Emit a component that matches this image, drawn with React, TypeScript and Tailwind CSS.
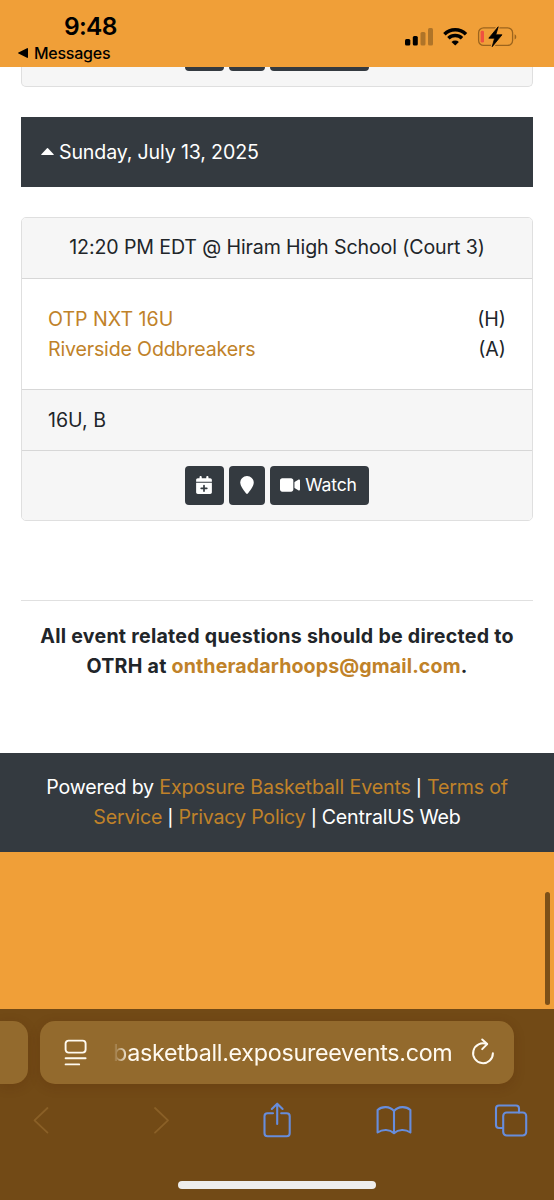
import React from "react";
import { FaCalendarPlus, FaLocationPin, FaVideo } from "react-icons/fa6";

function StatusBar() {
  return (
    <header className="flex h-[67px] shrink-0 justify-between bg-[#f09f38] text-black">
      <div className="flex flex-col pl-[18px]">
        <div className="mt-[10px] pl-[46px] text-[24.5px] leading-[32px] font-semibold tracking-[-0.7px]">9:48</div>
        <div className="flex h-[22px] items-center gap-[6px] text-[16px] leading-[22px] font-medium tracking-[-0.25px]">
          <svg width="10" height="10" viewBox="0 0 10 10">
            <path d="M10 .4v9.2a.8.8 0 0 1-1 .2L.5 5.6a.7.7 0 0 1 0-1.2L9 .2a.8.8 0 0 1 1 .2Z" />
          </svg>
          <span>Messages</span>
        </div>
      </div>
      <svg className="mt-[24px] mr-[36px]" width="114" height="26" viewBox="404 24 114 26">
        <rect x="405" y="39" width="5.3" height="6.5" rx="1.5" />
        <rect x="412.8" y="36" width="5" height="9.5" rx="1.5" />
        <rect x="420.5" y="32" width="5" height="13.5" rx="1.5" opacity=".27" />
        <rect x="428" y="28" width="5" height="17.5" rx="1.5" opacity=".27" />
        <g fill="none" stroke="#000" strokeWidth="3.5">
          <path d="M444.4 34.2a15.5 15.5 0 0 1 21.6 0" />
          <path d="M448.4 38.3a9.8 9.8 0 0 1 13.6 0" />
        </g>
        <path d="M451.5 42a5.4 5.4 0 0 1 7.4 0L455.2 45.6Z" />
        <rect x="478.6" y="27.8" width="34" height="17.6" rx="5" fill="none" stroke="#9c641d" strokeWidth="1.3" />
        <path d="M514.6 34.2c2.2.9 2.2 4.4 0 5.2Z" fill="#9c641d" />
        <rect x="480.6" y="30.8" width="3.4" height="11.8" rx="1.4" fill="#ef5140" />
        <path d="M498.2 26.8 488.8 38.2h5.8l-2.4 8.5 9.8-11.9h-6.2Z" stroke="#f09f38" strokeWidth="3" />
        <path d="M498.2 26.8 488.8 38.2h5.8l-2.4 8.5 9.8-11.9h-6.2Z" stroke="#000" strokeWidth=".8" strokeLinejoin="round" />
      </svg>
    </header>
  );
}

function GameCard() {
  return (
    <section className="mt-[30px] flex h-[304px] flex-col overflow-hidden rounded-[5px] border-[1.5px] border-[#dfdfdf] bg-white">
      <div className="flex h-[61px] items-center justify-center border-b-[1.5px] border-[#d7d7d7] bg-[#f6f6f6] pb-[2px] tracking-[-0.12px] whitespace-nowrap">
        12:20 PM EDT @ Hiram High School (Court 3)
      </div>
      <div className="flex h-[111px] flex-col justify-center border-b-[1.5px] border-[#d7d7d7] px-[26px] pb-px">
        <div className="flex justify-between">
          <a className="text-[#c08229]">OTP NXT 16U</a>
          <span>(H)</span>
        </div>
        <div className="flex justify-between">
          <a className="tracking-[-0.17px] text-[#c08229]">Riverside Oddbreakers</a>
          <span>(A)</span>
        </div>
      </div>
      <div className="flex h-[61px] items-center border-b-[1.5px] border-[#d7d7d7] bg-[#f6f6f6] px-[26px]">16U, B</div>
      <div className="flex flex-1 items-center justify-center gap-[5px] bg-[#f6f6f6] pb-px text-white">
        <button className="flex h-[39px] w-[39px] items-center justify-center rounded-[4px] bg-[#343a40] pr-px pb-px">
          <FaCalendarPlus size={18} />
        </button>
        <button className="flex h-[39px] w-[36px] items-center justify-center rounded-[4px] bg-[#343a40] pr-px pb-px">
          <FaLocationPin size={18} />
        </button>
        <button className="flex h-[39px] w-[99px] items-center justify-center gap-[5px] rounded-[4px] bg-[#343a40] pr-[2px] pb-px text-[17.6px] tracking-[-0.15px]">
          <FaVideo size={20} />
          <span>Watch</span>
        </button>
      </div>
    </section>
  );
}

function BrowserBar() {
  return (
    <div className="flex h-[191px] shrink-0 flex-col bg-[#724a16]">
      <div className="mt-[12px] flex h-[63px] gap-[12px]">
        <div className="w-[28px] rounded-r-[15px] bg-[#936a2d] shadow-[0_3px_12px_rgba(80,30,0,.2)]" />
        <div className="flex w-[474px] items-center rounded-[15px] bg-[#936a2d] text-[#fffaf0] shadow-[0_3px_12px_rgba(80,30,0,.2)]">
          <svg className="ml-[24px]" width="24" height="28" viewBox="0 0 24 28" fill="none" stroke="currentColor" strokeWidth="1.9" strokeLinecap="round">
            <rect x="1.6" y="1.6" width="20" height="12" rx="3" />
            <path d="M1.6 19.2h20M1.6 25.4h13.6" />
          </svg>
          <div className="ml-[25px] w-[342px] text-[23.3px] tracking-[-0.3px] whitespace-nowrap [mask-image:linear-gradient(to_right,transparent,black_16px)]">
            basketball.exposureevents.com
          </div>
          <svg className="mb-[2px] ml-[16px]" width="26" height="28" viewBox="0 0 26 28" fill="none" stroke="currentColor" strokeWidth="2" strokeLinecap="round" strokeLinejoin="round">
            <path d="M15.8 6.1A9.9 9.9 0 1 0 21.9 15.2" />
            <path d="m11.2 1.5 5 4.6-5 5" />
          </svg>
        </div>
      </div>
      <svg width="554" height="66" viewBox="0 1084 554 66" fill="none" strokeLinecap="round" strokeLinejoin="round" strokeWidth="2.1" stroke="#678ddc">
        <g stroke="#8a6027" strokeWidth="1.8">
          <path d="m47.5 1108-13 12.3 13 12.3" />
          <path d="m155 1108 13 12.3-13 12.3" />
        </g>
        <path d="M273 1113.2h-5.5a3 3 0 0 0-3 3v17a3 3 0 0 0 3 3h19.2a3 3 0 0 0 3-3v-17a3 3 0 0 0-3-3h-5.5" />
        <path d="M277.2 1124v-20m-5.4 5 5.4-5.3 5.4 5.3" />
        <path d="M394 1111c-4.3-5-12.2-5-16.4-1v22.5c5.2-3.5 12-3.2 16.4.7 4.4-3.9 11.2-4.2 16.4-.7V1110c-4.2-4-12.1-4-16.4 1Zm0 0v22" />
        <path d="M503 1128h-4a3 3 0 0 1-3-3v-16.5a3 3 0 0 1 3-3h17a3 3 0 0 1 3 3v4" />
        <rect x="503.2" y="1112.5" width="23" height="23" rx="3.5" />
      </svg>
      <div className="mx-auto mt-[31px] h-[8px] w-[198px] rounded-full bg-[#eeedeb]" />
    </div>
  );
}

function Pipe() {
  return <span className="text-[16.5px] leading-none font-medium">|</span>;
}

export default function App() {
  return (
    <div className="relative flex h-[1200px] w-[554px] flex-col overflow-hidden bg-[#f09f38] font-['Inter',sans-serif] text-[19.6px] leading-[30px] text-[#212529]">
      <StatusBar />
      <main className="h-[686px] shrink-0 bg-white px-[21px]">
        <div className="flex h-[20px] justify-center gap-[5px] rounded-b-[5px] border-[1.5px] border-t-0 border-[#dfdfdf] bg-[#f6f6f6]">
          <div className="h-[4px] w-[39px] rounded-b-[4px] bg-[#343a40]" />
          <div className="h-[4px] w-[36px] rounded-b-[4px] bg-[#343a40]" />
          <div className="h-[4px] w-[99px] rounded-b-[4px] bg-[#343a40]" />
        </div>
        <div className="mt-[30px] flex h-[70px] items-center gap-[5px] bg-[#343a40] pl-[20px] text-white">
          <svg className="mb-px" width="13" height="7" viewBox="0 0 13 7" fill="currentColor">
            <path d="M.6 7Q0 7 .4 6.3L6 .3q.5-.4 1 0l5.6 6q.4.7-.2.7Z" />
          </svg>
          <span className="tracking-[-0.15px]">Sunday, July 13, 2025</span>
        </div>
        <GameCard />
        <div className="mt-[79px] h-px bg-[#e0e0e0]" />
        <p className="mt-[20px] text-center font-bold tracking-[0.26px] whitespace-nowrap">
          All event related questions should be directed to
          <br />
          OTRH at <a className="tracking-[0.12px] text-[#c08229]">ontheradarhoops@gmail.com</a>.
        </p>
      </main>
      <footer className="h-[99px] shrink-0 bg-[#343a40] pt-[19px] text-center tracking-[-0.18px] whitespace-nowrap text-white">
        Powered by <a className="tracking-[-0.12px] text-[#c08229]">Exposure Basketball Events</a> <Pipe /> <a className="text-[#c08229]">Terms of</a>
        <br />
        <a className="text-[#c08229]">Service</a> <Pipe /> <a className="text-[#c08229]">Privacy Policy</a> <Pipe /> CentralUS Web
      </footer>
      <div className="h-[157px] shrink-0" />
      <BrowserBar />
      <div className="absolute top-[892px] left-[545px] h-[113px] w-[5px] rounded-full bg-[#7c5018]" />
    </div>
  );
}
